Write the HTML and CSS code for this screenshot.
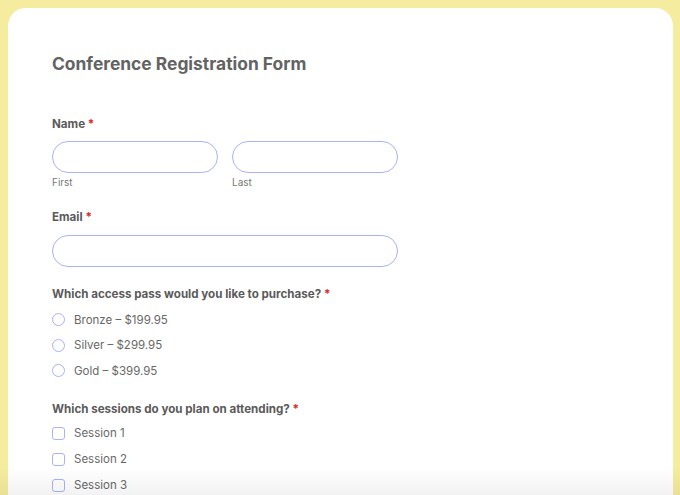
FILE: index.html
```html
<!DOCTYPE html>
<html lang="en">
<head>
<meta charset="utf-8">
<title>Conference Registration Form</title>
<link rel="stylesheet" href="styles.css">
</head>
<body>
<div class="page">
  <main class="card">
    <h1 class="title">Conference Registration Form</h1>

    <div class="field field-name">
      <div class="label">Name <span class="req">*</span></div>
      <div class="name-row">
        <div class="sub">
          <div class="input"></div>
          <div class="sublabel">First</div>
        </div>
        <div class="sub">
          <div class="input"></div>
          <div class="sublabel">Last</div>
        </div>
      </div>
    </div>

    <div class="field field-email">
      <div class="label">Email <span class="req">*</span></div>
      <div class="input input-wide"></div>
    </div>

    <div class="field field-pass">
      <div class="label">Which access pass would you like to purchase? <span class="req">*</span></div>
      <ul class="options">
        <li class="option"><span class="radio"></span><span class="opt-text">Bronze – $199.95</span></li>
        <li class="option"><span class="radio"></span><span class="opt-text">Silver – $299.95</span></li>
        <li class="option"><span class="radio"></span><span class="opt-text">Gold – $399.95</span></li>
      </ul>
    </div>

    <div class="field field-sessions">
      <div class="label">Which sessions do you plan on attending? <span class="req">*</span></div>
      <ul class="options options-tight">
        <li class="option option-tall"><span class="check"></span><span class="opt-text">Session 1</span></li>
        <li class="option option-tall"><span class="check"></span><span class="opt-text">Session 2</span></li>
        <li class="option option-tall"><span class="check"></span><span class="opt-text">Session 3</span></li>
      </ul>
    </div>
  </main>
</div>
<div class="fade"></div>
</body>
</html>
```

FILE: styles.css
```css
html, body {
  margin: 0;
  padding: 0;
  height: 100%;
  overflow: hidden;
}

body {
  background: #f6ec9f;
  font-family: Inter, "Noto Sans", "Liberation Sans", sans-serif;
  color: #5b5b5b;
}

.page {
  padding: 8px 7px 0 8px;
}

.card {
  background: #ffffff;
  border-radius: 18px;
  padding: 45px 44px 40px 44px;
  min-height: 600px;
  box-sizing: border-box;
}

.title {
  margin: 0;
  font-size: 17.4px;
  line-height: 22px;
  font-weight: 700;
  color: #636363;
}

.field {
  display: flex;
  flex-direction: column;
}

.field-name {
  margin-top: 41px;
}

.field-email {
  margin-top: 20px;
}

.field-pass {
  margin-top: 19px;
}

.field-sessions {
  margin-top: 17px;
}

.label {
  font-size: 11.6px;
  line-height: 16px;
  font-weight: 700;
  color: #5a5a5a;
}

.req {
  color: #e3262b;
}

.name-row {
  display: flex;
  gap: 14px;
  margin-top: 9px;
}

.sub {
  width: 166px;
  display: flex;
  flex-direction: column;
}

.input {
  height: 32px;
  box-sizing: border-box;
  border: 1px solid #a8b3f8;
  border-radius: 16px;
  background: #fff;
}

.input-wide {
  width: 346px;
  margin-top: 10px;
}

.sublabel {
  margin-top: 2px;
  font-size: 10px;
  line-height: 14px;
  color: #777777;
}

.options {
  list-style: none;
  margin: 5px 0 0 0;
  padding: 0;
  display: flex;
  flex-direction: column;
}

.options-tight {
  margin-top: 3.5px;
}

.option {
  height: 25.5px;
  display: flex;
  align-items: center;
  gap: 9px;
}

.option-tall {
  height: 26px;
}

.radio {
  width: 13px;
  height: 13px;
  box-sizing: border-box;
  border: 1px solid #a8b3f8;
  border-radius: 50%;
  flex: none;
}

.check {
  width: 13px;
  height: 13px;
  box-sizing: border-box;
  border: 1px solid #a8b3f8;
  border-radius: 3px;
  flex: none;
}

.opt-text {
  font-size: 11.5px;
  line-height: 16px;
  color: #686868;
}

.fade {
  position: fixed;
  left: 0;
  right: 0;
  bottom: 0;
  height: 28px;
  background: linear-gradient(to bottom, rgba(0,0,0,0), rgba(0,0,0,0.05));
  pointer-events: none;
}
```
